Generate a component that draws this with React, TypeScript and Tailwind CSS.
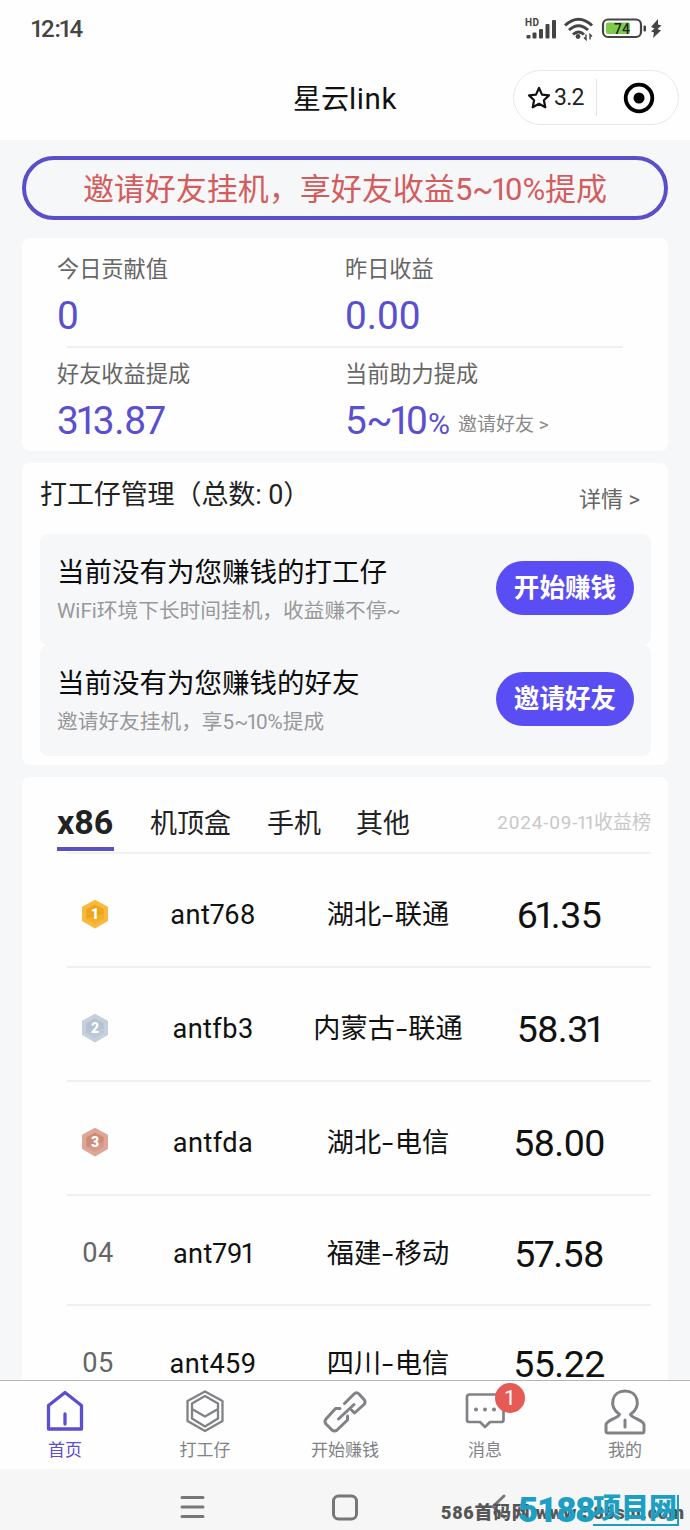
import React from "react";

function Num({ value }: { value: string }) {
  return (
    <>
      {value.split("").map((c, i) =>
        c === "1" ? (
          <span key={i} className="-ml-[0.08em] -mr-[0.11em]">1</span>
        ) : c === "7" ? (
          <span key={i} className="-mx-[0.03em]">7</span>
        ) : (
          <React.Fragment key={i}>{c}</React.Fragment>
        )
      )}
    </>
  );
}

function StatusBar() {
  return (
    <div className="flex h-[58px] items-center justify-between pl-8 pr-[26px] text-[#444]">
      <span className="text-[24px] font-medium leading-[30px] tracking-[-0.2px]"><Num value="12:14" /></span>
      <svg width="140" height="30" viewBox="0 0 140 30" fill="none">
        <text x="1" y="12" fontSize="10" fontWeight="700" fill="#444" textLength="14">HD</text>
        <g fill="#444">
          <rect x="2.500" y="21" width="4" height="3.500" rx="1" />
          <rect x="8.500" y="18.500" width="4" height="6" rx="1" />
          <rect x="15" y="15" width="4" height="9.500" rx="1" />
          <rect x="21.500" y="10" width="4" height="14.500" rx="1" />
          <rect x="28" y="6" width="4" height="18.500" rx="1" />
        </g>
        <g stroke="#444" strokeWidth="3">
          <path d="M41 11.500 Q54.500 -1 68 11.500" />
          <path d="M45 16 Q54.500 7.500 64 16" />
          <path d="M49 20.500 Q54.500 15.500 60 20.500" />
        </g>
        <circle cx="54" cy="22.500" r="2.400" fill="#444" />
        <path d="M62 20.500v5l-2-2M66 25.500v-5l2 2" stroke="#444" strokeWidth="1.400" />
        <rect x="79" y="5.500" width="38" height="17.500" rx="5" stroke="#444" strokeWidth="2.200" />
        <rect x="82" y="8.500" width="24" height="11.500" rx="2" fill="#7ccb4b" />
        <text x="98" y="19.500" fontSize="14" fontWeight="500" textAnchor="middle" fill="#222">74</text>
        <rect x="119.500" y="11.500" width="2.500" height="6" rx="1" fill="#444" />
        <path d="M134 5 L127 13 L130.500 14.500 L127 17.500 L130 18.500 L129 24 L137 16.500 L133.500 15 L137.500 11.500 L134 10.500 Z" fill="#444" />
      </svg>
    </div>
  );
}

function TitleBar() {
  return (
    <div className="grid h-[82px] grid-cols-[177px_336px_166px] items-start pt-3">
      <span />
      <h1 className="pt-[12px] text-center text-[28px] font-normal leading-[34px] text-[#111]">
        星云<span className="text-[29.500px] tracking-[0.6px]">link</span>
      </h1>
      <div className="flex h-[55px] items-center rounded-full border border-[#e8e8e8] bg-white">
        <div className="flex w-[83px] items-center gap-[3px] border-r border-[#e5e5e5] py-1 pl-[13px]">
          <svg width="24" height="24" viewBox="0 0 24 24" fill="none" stroke="#111" strokeWidth="2.200" strokeLinejoin="round">
            <path d="M12 2 L15 8.600 L22 9.400 L16.900 14.200 L18.300 21.300 L12 17.800 L5.700 21.300 L7.100 14.200 L2 9.400 L9 8.600 Z" />
          </svg>
          <span className="pt-px text-[23px] leading-7 tracking-[-0.7px] text-[#222]">3.2</span>
        </div>
        <svg className="ml-[26px]" width="32" height="32" viewBox="0 0 32 32">
          <circle cx="16" cy="16" r="13.300" fill="none" stroke="#000" strokeWidth="3.800" />
          <circle cx="16" cy="16" r="5.500" />
        </svg>
      </div>
    </div>
  );
}

function Stat({ label, children }: { label: string; children: React.ReactNode }) {
  return (
    <div className="w-[288px]">
      <div className="h-[38px] text-[22.200px] leading-[40px] text-[#666]">{label}</div>
      <div className="flex h-[56px] items-baseline whitespace-nowrap text-[38.800px] leading-[58px] text-[#5a4fcf]">{children}</div>
    </div>
  );
}

function StatsCard() {
  return (
    <section className="h-[213px] rounded-lg bg-[#fefefe] pl-[35px] pt-[11px]">
      <div className="flex h-[97px]">
        <Stat label="今日贡献值"><span><Num value="0" /></span></Stat>
        <Stat label="昨日收益"><span><Num value="0.00" /></span></Stat>
      </div>
      <div className="ml-[10px] h-[2px] w-[556px] bg-[#f0f0f1]" />
      <div className="flex pt-[6px]">
        <Stat label="好友收益提成"><span className="tracking-[-0.3px]"><Num value="313.87" /></span></Stat>
        <Stat label="当前助力提成">
          <span className="tracking-[-0.6px]"><Num value="5~10" /></span>
          <span className="ml-[1px] text-[30px]">%</span>
          <span className="ml-2 -translate-y-[3px] text-[19px] text-[#888]">邀请好友 &gt;</span>
        </Stat>
      </div>
    </section>
  );
}

function Task({ title, sub, action }: { title: string; sub: React.ReactNode; action: string }) {
  return (
    <div className="flex h-[111px] items-center justify-between rounded-lg bg-[#f6f7f9] pl-[17px] pr-[17px]">
      <div className="pt-[3px]">
        <div className="text-[27.500px] leading-[40px] text-[#0c0c0c]">{title}</div>
        <div className="text-[20.700px] leading-[36px] text-[#999]">{sub}</div>
      </div>
      <button className="mb-1 h-[54px] w-[138px] rounded-full bg-[#5a4df3] text-[25.600px] font-bold leading-[52px] text-white">{action}</button>
    </div>
  );
}

function WorkerCard() {
  return (
    <section className="h-[302px] rounded-lg bg-[#fefefe] pl-[18px] pr-[17px]">
      <div className="flex h-[71px] items-start justify-between pr-[11px] pt-[12px]">
        <h2 className="text-[27px] font-normal leading-[40px] tracking-[-0.1px] text-[#222]">打工仔管理（总数: 0）</h2>
        <span className="pt-[5px] text-[22px] leading-[40px] text-[#666]">详情 &gt;</span>
      </div>
      <Task title="当前没有为您赚钱的打工仔" sub="WiFi环境下长时间挂机，收益赚不停~" action="开始赚钱" />
      <Task title="当前没有为您赚钱的好友" sub={<>邀请好友挂机，享<Num value="5~10" />%提成</>} action="邀请好友" />
    </section>
  );
}

const medals = [
  { edge: "#f8b93c", fill: "#eda51f" },
  { edge: "#c5d0dc", fill: "#b4c1d0" },
  { edge: "#dda797", fill: "#cd8c7b" },
];

function Medal({ n }: { n: number }) {
  const m = medals[n - 1];
  return (
    <svg width="32" height="34" viewBox="0 0 32 34">
      <path d="M16 4 L28 10.500 V23.500 L16 30.500 L4 23.500 V10.500 Z" fill={m.edge} stroke={m.edge} strokeWidth="2" strokeLinejoin="round" />
      <path d="M16 7.500 L24.800 12.300 V21.700 L16 26.800 L7.200 21.700 V12.300 Z" fill={m.fill} />
      <path d="M7.200 21.700 L16 26.800 L24.800 21.700 V17 Z" fill={m.edge} opacity="0.5" />
      <text x="16" y="22" textAnchor="middle" fontSize="14" fontWeight="900" fill="#fff">{n}</text>
    </svg>
  );
}

const rows = [
  ["ant768", "湖北", "联通", "61.35"],
  ["antfb3", "内蒙古", "联通", "58.31"],
  ["antfda", "湖北", "电信", "58.00"],
  ["ant791", "福建", "移动", "57.58"],
  ["ant459", "四川", "电信", "55.22"],
];

function Ranking() {
  return (
    <section className="h-[603px] shrink-0 overflow-hidden rounded-t-lg bg-[#fefefe] pl-[35px] pr-[17px]">
      <div className="flex h-[74px] items-start whitespace-nowrap text-[27px] leading-[48px] text-[#222]">
        <div className="flex h-[74px] w-[57px] flex-col justify-end border-b-4 border-[#5a50c0] pb-px text-[34px] font-bold leading-[48px]">x86</div>
        <span className="ml-[36px] pt-[23px]">机顶盒</span>
        <span className="ml-[36px] pt-[23px]">手机</span>
        <span className="ml-[35px] pt-[23px]">其他</span>
        <span className="ml-auto pt-[22px] text-[19px] text-[#c8c8c8]"><span className="tracking-[0.8px]">2024-09-<Num value="11" /></span>收益榜</span>
      </div>
      <div className="ml-[10px] mt-[1px] h-[2px] bg-[#f1f1f2]" />
      {rows.map(([name, region, carrier, value], i) => (
        <div
          key={name}
          className={`ml-[10px] grid grid-cols-[62px_168px_182px_160px] items-center whitespace-nowrap border-b-2 border-[#f0f0f1] text-center text-[27.200px] text-[#111] ${i < 3 ? "h-[114px] pt-[8px]" : "h-[110px] pt-[6px]"}`}
        >
          <span className="flex justify-center text-[#666]">
            {i < 3 ? <span className="-translate-x-[3px]"><Medal n={i + 1} /></span> : <span className="pt-px tracking-[0.5px]">0{i + 1}</span>}
          </span>
          <span className="pt-[2px] tracking-[0.4px]"><Num value={name} /></span>
          <span className="pt-[3px]">{region}<span className="mx-[3px] inline-block scale-x-150">-</span>{carrier}</span>
          <span className="pt-[2px] text-[37.500px] tracking-[-0.5px]"><Num value={value} /></span>
        </div>
      ))}
    </section>
  );
}

const tabs: { label: string; icon: React.ReactNode }[] = [
  {
    label: "首页",
    icon: <path d="M5.500 16.500 L22 3.500 L38.500 16.500 V40 H5.500 Z M22 25 V35" strokeWidth="3.300" />,
  },
  {
    label: "打工仔",
    icon: <path d="M22 2.500 L39.500 12 V32 L22 42 L4.500 32 V12 Z M22 7 L35 14.500 V29.500 L22 37.500 L9 29.500 V14.500 Z M9 20 L22 27.500 L35 20" strokeWidth="2.300" />,
  },
  {
    label: "开始赚钱",
    icon: <path d="M21.500 14.500 L31 5 Q33.500 2.500 36 5 L41 10.500 Q43 13 41 15.500 L31.500 24 L28.500 21 M17 19.500 L12.500 19.500 L3 30 Q1 32.500 3 35 L9 41 Q11.500 43 14 41 L24.500 31 V27 M15.500 30 L31 15.500" strokeWidth="3" />,
  },
  {
    label: "消息",
    icon: (
      <>
        <path d="M6.500 5.500 H38 Q40.500 5.500 40.500 8 V31 Q40.500 33 38 33 H27 L22 38 L17 33 H6.500 Q4 33 4 31 V8 Q4 5.500 6.500 5.500 Z" strokeWidth="2.700" />
        <path d="M13 20.500 h.01 M22 20.500 h.01 M31 20.500 h.01" strokeWidth="4" />
      </>
    ),
  },
  {
    label: "我的",
    icon: <path d="M16.500 25.500 C5 17 9 2 22 2 C35 2 39 17 27.500 25.500 C29 29.500 41 31 41 36 V42 Q41 44 39 44 H5 Q3 44 3 42 V36 C3 31 15 29.500 16.500 25.500 Z M22 31 V38" strokeWidth="3" />,
  },
];

function TabBar() {
  return (
    <nav className="flex h-[89px] overflow-hidden border-t-[1.500px] border-[#b5b5b5] bg-[#fefefe]">
      {tabs.map((t, i) => (
        <div key={t.label} className={`relative flex shrink-0 flex-col items-center pt-2 ${i === 0 ? "-ml-[5px] w-[140px] text-[#5a4fcf]" : "w-[140px] text-[#808285]"}`}>
          <svg width="44" height="46" viewBox="0 0 44 46" fill="none" stroke="currentColor" strokeLinecap="round" strokeLinejoin="round">{t.icon}</svg>
          <span className="pt-px text-[17px] leading-[28px]">{t.label}</span>
          {i === 3 && (
            <span className="absolute left-[80px] top-[2px] h-[30px] w-[30px] rounded-full bg-[#e65a56] text-center text-[21px] leading-[31px] text-white">1</span>
          )}
        </div>
      ))}
    </nav>
  );
}

function SystemNav() {
  return (
    <div className="relative h-[61px] overflow-hidden bg-[#f6f6f6]">
      <svg width="690" height="61" viewBox="0 0 690 61" fill="none" stroke="#777" strokeWidth="3" strokeLinecap="round" strokeLinejoin="round">
        <path d="M182 28.500 H203 M182 38 H203 M182 47.500 H203" />
        <rect x="333.500" y="27" width="23" height="23" rx="5" />
        <path d="M504 27 L493 37.500 L504 48" />
      </svg>
      <span className="absolute left-[441px] top-[30px] whitespace-nowrap text-[18px] font-black leading-[28px] tracking-[0.7px] text-[#555]">586首码网 www.586sm.com</span>
      <div className="absolute left-[518px] top-[25px] flex h-[33px] items-center whitespace-nowrap font-black leading-[33px] text-[#1d9fc4]">
        <span className="w-[75px] text-[35px] tracking-[-1.200px]">5188</span>
        <span className="h-[31px] w-[86px] border-b-2 border-r-2 border-[#1d9fc4] text-[28px] leading-[27px]">项目网</span>
      </div>
    </div>
  );
}

export default function App() {
  return (
    <div className="h-[1530px] w-[690px] overflow-hidden bg-[#f6f7f9] font-['Roboto','Noto_Sans_CJK_SC',sans-serif]">
      <header className="h-[140px] bg-[#fefefe]">
        <StatusBar />
        <TitleBar />
      </header>
      <main className="flex h-[1240px] flex-col gap-3 overflow-hidden px-[22px] pt-4">
        <div className="mb-[6px] h-[64px] shrink-0 rounded-full border-4 border-[#5a4fc8] text-center text-[31px] leading-[60px] text-[#d45c5c]">
          邀请好友挂机，享好友收益<Num value="5~10" />%提成
        </div>
        <StatsCard />
        <WorkerCard />
        <Ranking />
      </main>
      <TabBar />
      <SystemNav />
    </div>
  );
}
